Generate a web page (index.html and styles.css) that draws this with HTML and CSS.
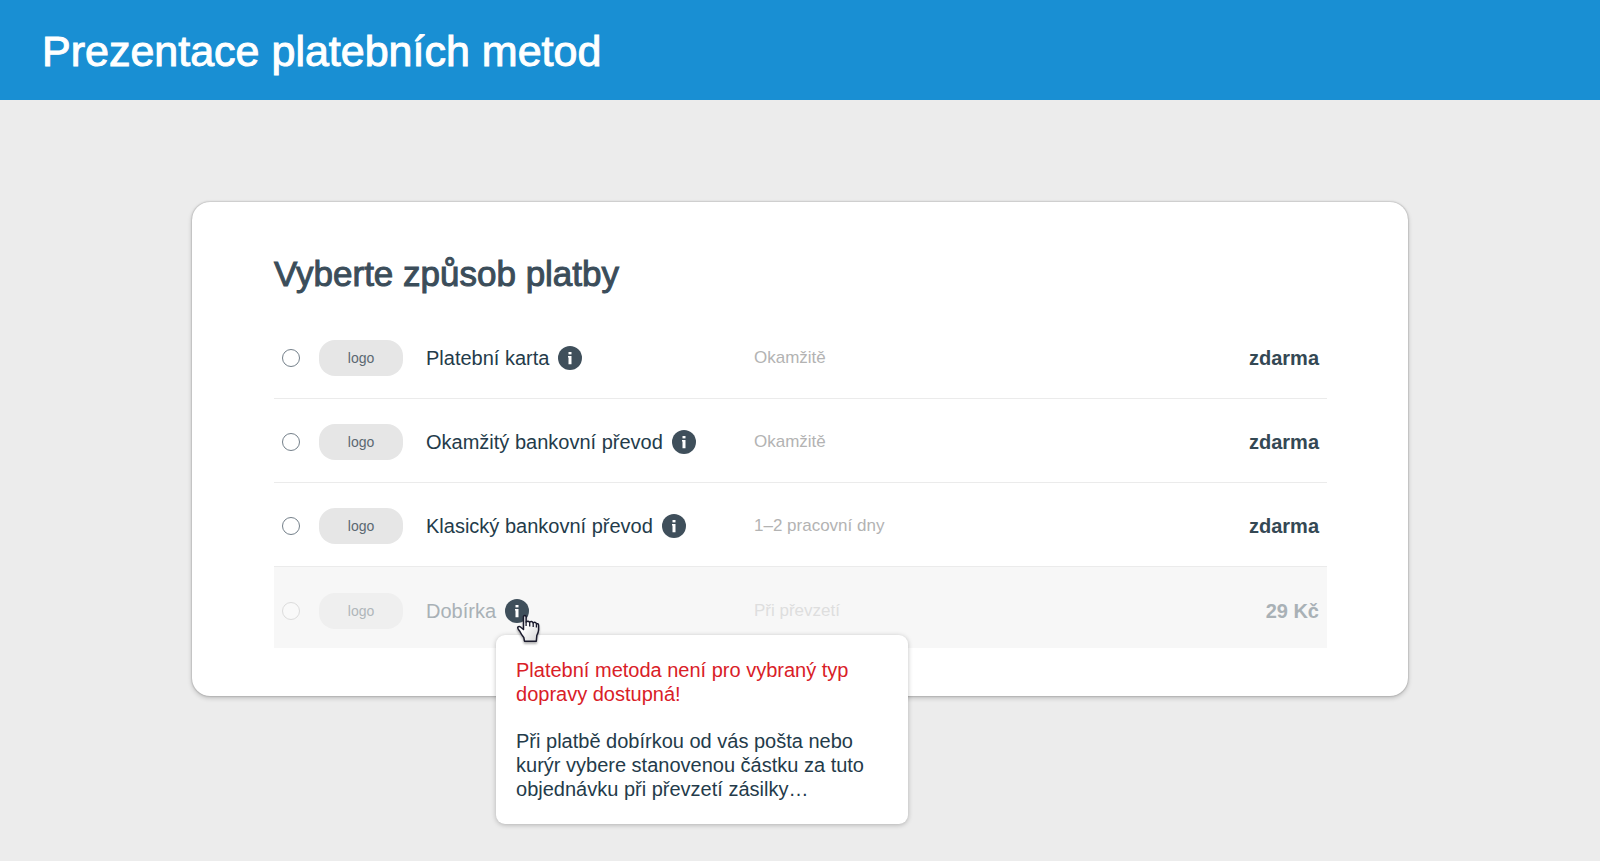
FILE: index.html
```
<!DOCTYPE html>
<html lang="cs">
<head>
<meta charset="utf-8">
<title>Prezentace platebních metod</title>
<link rel="stylesheet" href="styles.css">
</head>

<body>
<!-- ikona "i" se používá u každé metody -->
<svg width="0" height="0" class="defs" aria-hidden="true">
    <symbol id="info" viewBox="0 0 24 24">
        <circle cx="12" cy="12" r="12" fill="#3f4f5b"/>
        <rect x="10.500" y="6" width="3" height="2.400" fill="#fff"/>
        <path d="M10 10h3.500v8.200h-3V11.400H10z" fill="#fff"/>
    </symbol>
</svg>

<header class="header">
    <h1>Prezentace platebních metod</h1>
</header>

<main class="card">
    <h2>Vyberte způsob platby</h2>
    <form class="methods">
        <div class="method">
            <input type="radio" name="payment" id="card">
            <span class="logo">logo</span>
            <div class="name">
                <label for="card">Platební karta</label>
                <button type="button" class="info" aria-label="Informace"><svg><use href="#info"/></svg></button>
            </div>
            <span class="time">Okamžitě</span>
            <strong class="price">zdarma</strong>
        </div>
        <div class="method">
            <input type="radio" name="payment" id="instant">
            <span class="logo">logo</span>
            <div class="name">
                <label for="instant">Okamžitý bankovní převod</label>
                <button type="button" class="info" aria-label="Informace"><svg><use href="#info"/></svg></button>
            </div>
            <span class="time">Okamžitě</span>
            <strong class="price">zdarma</strong>
        </div>
        <div class="method">
            <input type="radio" name="payment" id="transfer">
            <span class="logo">logo</span>
            <div class="name">
                <label for="transfer">Klasický bankovní převod</label>
                <button type="button" class="info" aria-label="Informace"><svg><use href="#info"/></svg></button>
            </div>
            <span class="time">1–2 pracovní dny</span>
            <strong class="price">zdarma</strong>
        </div>
        <div class="method disabled">
            <input type="radio" name="payment" id="cod" disabled>
            <span class="logo">logo</span>
            <div class="name">
                <label for="cod">Dobírka</label>
                <div class="info-wrap">
                    <button type="button" class="info" aria-label="Informace" aria-describedby="tip"><svg><use href="#info"/></svg></button>
                    <div class="tooltip" id="tip" role="tooltip">
                        <p class="error">Platební metoda není pro vybraný typ dopravy dostupná!</p>
                        <p>Při platbě dobírkou od vás pošta nebo kurýr vybere stanovenou částku za tuto objednávku při převzetí zásilky…</p>
                    </div>
                    <svg class="pointer" viewBox="0 0 24 30" aria-hidden="true">
                        <defs>
                            <linearGradient id="hand" x1="0" y1="0" x2="1" y2="1">
                                <stop offset="0.4" stop-color="#fff"/>
                                <stop offset="1" stop-color="#d4d4d4"/>
                            </linearGradient>
                        </defs>
                        <path d="M7.500 2.500Q8.800 .4 10.100 2.500V8Q12 6.200 13.600 8.200Q15.600 6.600 17.100 8.800Q19.300 7.600 20.300 9.400Q22.600 9.200 22.600 11.500V16Q22.400 18.500 20.800 21.500L20.300 27.200H8.500L7.800 23.500Q5.400 20.600 3.800 17.200Q1.400 14.400 1.700 13.300Q3.200 11.400 5.400 13.700L7.500 15.500z" fill="url(#hand)" stroke="#1b1b2d" stroke-width="1.500" stroke-linejoin="round"/>
                        <path d="M10.100 7.500V12M13.700 8.500V12.500M17.200 9V13M20.400 10V13.500" fill="none" stroke="#1b1b2d" stroke-width="1.300"/>
                    </svg>
                </div>
            </div>
            <span class="time">Při převzetí</span>
            <strong class="price">29 Kč</strong>
        </div>
    </form>
</main>
</body>
</html>
```
FILE: styles.css
```
* {
    box-sizing: border-box;
}
body {
    min-height: 100vh;
    margin: 0;
    background: #ececec;
    color: #243b4a;
    font-family: "Helvetica Neue", "Liberation Sans", Arial, sans-serif;
    font-size: 20px;
    line-height: 24px;
}
.defs {
    position: absolute;
}
.header {
    padding: 27px 42px 25px;
    background: #198fd3;
    color: #fff;
}
h1, h2 {
    margin: 0;
    font-weight: normal;
}
h1 {
    font-size: 43px;
    line-height: 48px;
    -webkit-text-stroke: 1px;
}
h2 {
    margin-bottom: 21px;
    color: #3b4d5a;
    font-size: 35px;
    line-height: 40px;
    -webkit-text-stroke: 1px;
}
.card {
    width: 76%;
    margin: 102px auto 0;
    padding: 52px 81px 48px 82px;
    background: #fff;
    border-radius: 18px;
    box-shadow: 0 0 2px rgba(0,0,0,.35), 0 2px 5px rgba(0,0,0,.2);
}
.method {
    display: grid;
    grid-template-columns: 37px 107px 328px 1fr auto;
    align-items: center;
    padding: 25px 8px 22px;
    border-bottom: 1px solid #ebebeb;
}
.method input {
    appearance: none;
    width: 18px;
    height: 18px;
    margin: 0;
    border: 1px solid #74808a;
    border-radius: 50%;
    background: #fff;
}
.logo {
    width: 84px;
    border-radius: 16px;
    background: #e6e6e6;
    color: #5b6871;
    font-size: 14px;
    line-height: 36px;
    text-align: center;
}
.name {
    display: flex;
    align-items: center;
    gap: 9px;
}
.info {
    display: block;
    width: 24px;
    height: 24px;
    padding: 0;
    border: none;
    background: none;
    cursor: pointer;
}
.info svg {
    display: block;
    width: 24px;
    height: 24px;
}
.time {
    color: #b3b3b3;
    font-size: 17px;
}
.price {
    color: #344854;
}

/* nedostupná metoda */
.disabled {
    padding-top: 26px;
    padding-bottom: 19px;
    border-bottom: none;
    background: #f7f7f7;
}
.disabled input {
    border-color: #dcdcdc;
    background: #f9f9f9;
}
.disabled .logo {
    background: #efefef;
    color: #b0b6ba;
}
.disabled label,
.disabled .price {
    color: #a9b1b6;
}
.disabled .time {
    color: #dedede;
}

.info-wrap {
    position: relative;
}
.tooltip {
    position: absolute;
    top: 36px;
    left: -9px;
    width: 412px;
    padding: 23px 20px;
    border-radius: 9px;
    background: #fff;
    box-shadow: 0 1px 5px rgba(0,0,0,.25);
}
.tooltip p {
    margin: 0;
}
.tooltip .error {
    margin-bottom: 23px;
    color: #d92027;
}
.pointer {
    position: absolute;
    top: 15px;
    left: 11px;
    width: 24px;
    height: 30px;
    filter: drop-shadow(0 2px 1px rgba(0,0,0,.3));
    pointer-events: none;
}
```
